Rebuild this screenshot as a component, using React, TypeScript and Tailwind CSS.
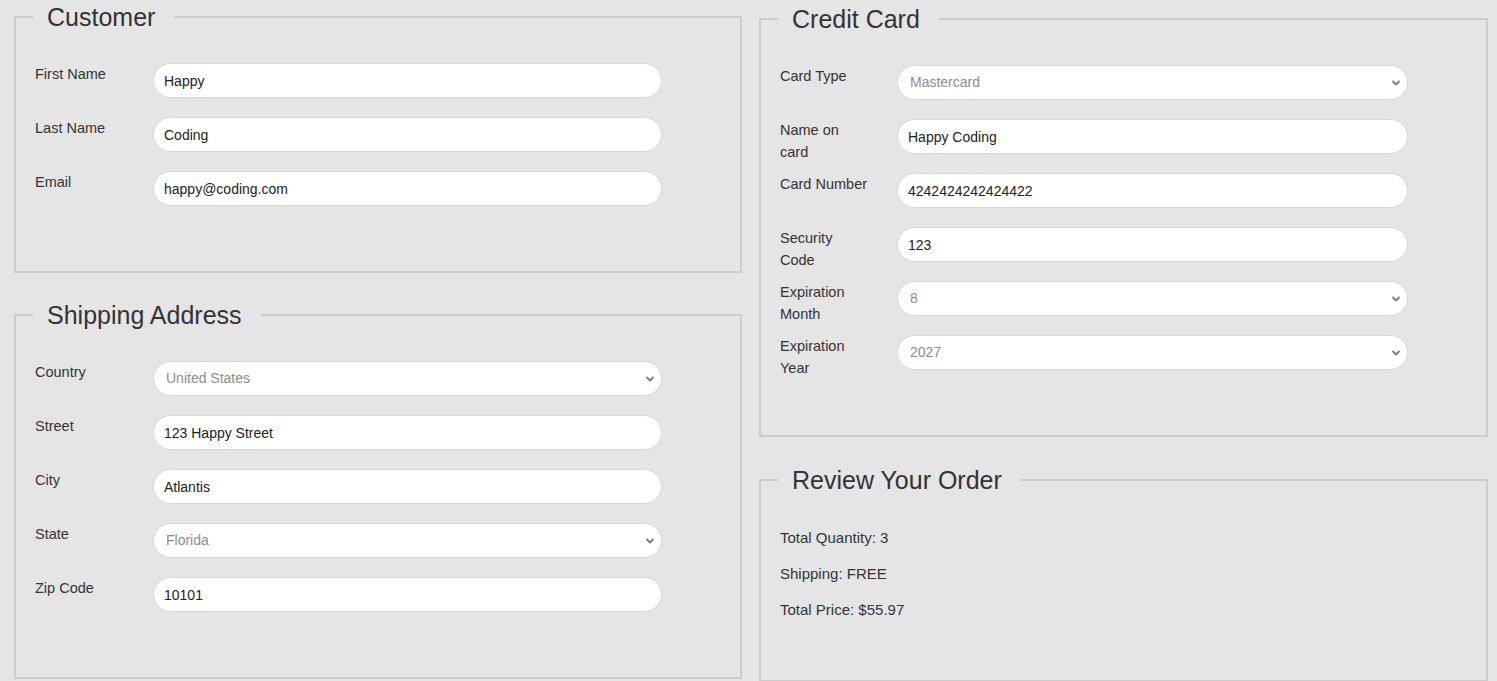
import React from 'react';

type Field = {
  label: string;
  value: string;
  select?: boolean;
};

const customer: Field[] = [
  { label: 'First Name', value: 'Happy' },
  { label: 'Last Name', value: 'Coding' },
  { label: 'Email', value: 'happy@coding.com' },
];

const shipping: Field[] = [
  { label: 'Country', value: 'United States', select: true },
  { label: 'Street', value: '123 Happy Street' },
  { label: 'City', value: 'Atlantis' },
  { label: 'State', value: 'Florida', select: true },
  { label: 'Zip Code', value: '10101' },
];

const card: Field[] = [
  { label: 'Card Type', value: 'Mastercard', select: true },
  { label: 'Name on card', value: 'Happy Coding' },
  { label: 'Card Number', value: '4242424242424422' },
  { label: 'Security Code', value: '123' },
  { label: 'Expiration Month', value: '8', select: true },
  { label: 'Expiration Year', value: '2027', select: true },
];

function Chevron() {
  return (
    <svg
      className="pointer-events-none absolute right-[7px] top-1/2 h-[10px] w-[10px] -translate-y-1/2 text-[#7a7a7a]"
      viewBox="0 0 10 10"
      fill="none"
      stroke="currentColor"
      strokeWidth={1.8}
      strokeLinecap="round"
      strokeLinejoin="round"
    >
      <path d="M2 3.5l3 3 3-3" />
    </svg>
  );
}

function Row({ field, narrow }: { field: Field; narrow?: boolean }) {
  return (
    <div className="mb-[19px] flex h-[35px] items-start">
      <div className={`${narrow ? 'w-[117px]' : 'w-[118px]'} shrink-0`}>
        <label className="block w-[89px] text-[14.5px] leading-[22px] text-[#333]">{field.label}</label>
      </div>
      {field.select ? (
        <div className="relative flex-1">
          <select
            defaultValue={field.value}
            className="block h-[35px] w-full appearance-none rounded-full border border-[#d6d6d6] bg-white pl-[12px] pr-[24px] text-[14px] text-[#8c8c8c] outline-none"
          >
            <option>{field.value}</option>
          </select>
          <Chevron />
        </div>
      ) : (
        <input
          type="text"
          defaultValue={field.value}
          className="block h-[35px] flex-1 rounded-full border border-[#d6d6d6] bg-white px-[10px] text-[14px] text-[#222] outline-none"
        />
      )}
    </div>
  );
}

function Section({
  title,
  className,
  children,
}: {
  title: string;
  className?: string;
  children: React.ReactNode;
}) {
  return (
    <fieldset className={`m-0 min-w-0 border-2 border-[#cccccc] p-0 ${className ?? ''}`}>
      <legend className="ml-[17px] pl-[14px] pr-[19px] text-[25px] leading-[34px] text-[#333]">{title}</legend>
      <div className="pb-[46px] pl-[19px] pr-[78px] pt-[29px]">{children}</div>
    </fieldset>
  );
}

export default function App() {
  return (
    <div
      className="flex h-[681px] gap-[17px] overflow-hidden bg-[#e5e5e5] pl-[14px] pr-[9px]"
      style={{ fontFamily: '"Liberation Sans", Arial, sans-serif' }}
    >
      <div className="flex w-[728px] shrink-0 flex-col">
        <Section title="Customer">
          {customer.map((f) => (
            <Row key={f.label} field={f} />
          ))}
        </Section>
        <Section title="Shipping Address" className="mt-[25px]">
          {shipping.map((f) => (
            <Row key={f.label} field={f} />
          ))}
        </Section>
      </div>
      <div className="mt-[2px] flex flex-1 flex-col">
        <Section title="Credit Card">
          {card.map((f) => (
            <Row key={f.label} field={f} narrow />
          ))}
        </Section>
        <fieldset className="m-0 mt-[26px] min-w-0 border-2 border-[#cccccc] p-0">
          <legend className="ml-[17px] pl-[14px] pr-[19px] text-[25px] leading-[34px] text-[#333]">
            Review Your Order
          </legend>
          <div className="pb-[60px] pl-[19px] pt-[31px] text-[15px] leading-[20px] text-[#333]">
            <p className="mb-[16px]">Total Quantity: 3</p>
            <p className="mb-[16px]">Shipping: FREE</p>
            <p>Total Price: $55.97</p>
          </div>
        </fieldset>
      </div>
    </div>
  );
}
